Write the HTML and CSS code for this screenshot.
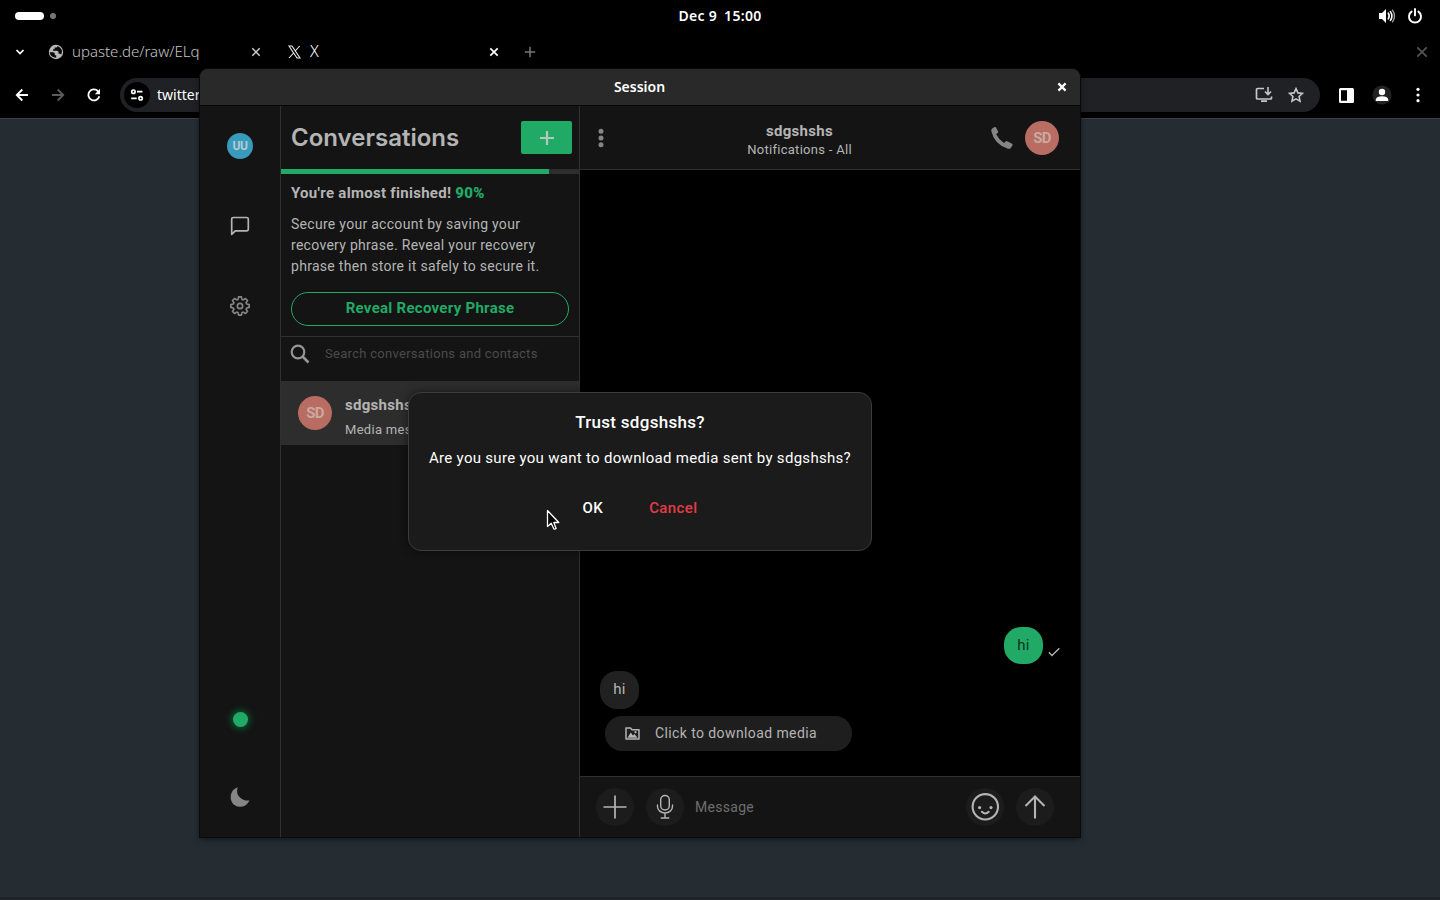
FILE: index.html
```html
<!DOCTYPE html>
<html lang="en">
  <head>
    <meta charset="UTF-8" />
    <meta name="viewport" content="width=device-width, initial-scale=1.0" />
    <title>Session</title>
    <link rel="stylesheet" href="styles.css">
  </head>
  <body>
    <!-- desktop top bar -->
    <header class="topbar">
      <div class="workspaces"><span class="pill"></span><span class="dot"></span></div>
      <div class="clock"><span>Dec 9</span><span>15:00</span></div>
      <div class="tray">
        <svg width="18" height="16" viewBox="0 0 18 16"><path d="M1 5h3l4-4v14l-4-4H1z" fill="#fff"/><path d="M10.3 5.2q1.8 2.8 0 5.6M12.4 3.6q3 4.400 0 8.800" fill="none" stroke="#fff" stroke-width="1.6" stroke-linecap="round"/><path d="M14.500 2.200q4 5.800 0 11.600" fill="none" stroke="#999" stroke-width="1.400" stroke-linecap="round"/></svg>
        <svg width="16" height="16" viewBox="0 0 16 16"><path d="M4.600 3.600a6 6 0 1 0 6.800 0M8 1v6.400" fill="none" stroke="#fff" stroke-width="1.900" stroke-linecap="round"/></svg>
      </div>
    </header>

    <!-- browser -->
    <nav class="tabs">
      <svg class="tab-search" width="10" height="8" viewBox="0 0 10 8"><path d="M1.500 2 5 5.600 8.500 2" fill="none" stroke="#fff" stroke-width="1.700"/></svg>
      <div class="tab tab-first">
        <svg width="16" height="16" viewBox="0 0 16 16"><circle cx="8" cy="8" r="7.200" fill="#b8b8b8"/><path d="M1.600 8.200H5q1.800 0 1.800 1.800v1.200h1.400v2.600Q2.600 13.400 1.600 8.200zM9.600 2q-.2 1.500-1.700 1.500H6.600v1.700H5v1.500h4.200q1.300.1 1.300 1.600v1.400h1.300q1 0 1.400 1Q15.800 5 9.600 2z" fill="#0a0a0a"/></svg>
        <span class="tab-name">upaste.de/raw/ELq</span>
        <svg class="close" width="10" height="10" viewBox="0 0 10 10"><path d="m1.300 1.300 7.400 7.400m0-7.400L1.300 8.700" stroke="#ccc" stroke-width="1.500"/></svg>
      </div>
      <div class="tab tab-active">
        <svg width="13" height="14" viewBox="0 0 13 14"><path d="M1 1h3l8 12H9zM11.700 1 7.200 6M5.600 8 1 13" fill="none" stroke="#eee" stroke-width="1.100"/></svg>
        <span class="tab-name">X</span>
        <svg class="close" width="10" height="10" viewBox="0 0 10 10"><path d="m1.300 1.300 7.400 7.400m0-7.400L1.300 8.700" stroke="#fff" stroke-width="1.700"/></svg>
      </div>
      <svg class="new-tab" width="12" height="12" viewBox="0 0 12 12"><path d="M6 .8v10.400M.8 6h10.400" stroke="#777" stroke-width="1.500"/></svg>
      <svg class="browser-close" width="12" height="12" viewBox="0 0 12 12"><path d="m1.300 1.300 9.400 9.400m0-9.400-9.400 9.400" stroke="#555" stroke-width="1.700"/></svg>
    </nav>
    <div class="toolbar">
      <svg width="14" height="14" viewBox="0 0 14 14"><path d="M13 7H2M7.300 1.500 1.800 7l5.500 5.500" fill="none" stroke="#fff" stroke-width="1.900"/></svg>
      <svg width="14" height="14" viewBox="0 0 14 14"><path d="M1 7h11M6.700 1.500 12.200 7l-5.500 5.500" fill="none" stroke="#5c5c5c" stroke-width="1.800"/></svg>
      <svg width="14" height="14" viewBox="0 0 14 14"><path d="M12.300 8.200A5.500 5.500 0 1 1 10.800 3L12.500 5" fill="none" stroke="#fff" stroke-width="1.800"/><path d="M13 .8v5.400H7.800z" fill="#fff"/></svg>
      <div class="omnibox">
        <span class="site-info">
          <svg width="14" height="14" viewBox="0 0 14 14"><g fill="none" stroke="#fff" stroke-width="1.700"><circle cx="3.400" cy="3.700" r="1.700"/><path d="M7 3.700h5.500M1.200 10.300h5.500"/><circle cx="10.600" cy="10.300" r="1.700"/></g></svg>
        </span>
        <span class="url">twitter.com</span>
        <svg class="install" width="18" height="16" viewBox="0 0 18 16"><path d="M9 1.500H2.500q-1 0-1 1V11q0 1 1 1h13q1 0 1-1V9.500M6 14.200h6" fill="none" stroke="#c6c6c6" stroke-width="1.700"/><path d="M13 0v7M10 4.500l3 3 3-3" fill="none" stroke="#c6c6c6" stroke-width="1.600"/></svg>
        <svg width="16" height="16" viewBox="0 0 16 16"><path d="m8 1.700 1.900 4.200 4.600.5-3.400 3.100.9 4.600L8 11.800l-4 2.300.9-4.600L1.500 6.400l4.600-.5z" fill="none" stroke="#c6c6c6" stroke-width="1.600"/></svg>
      </div>
      <svg class="side-panel" width="15" height="15" viewBox="0 0 15 15"><path fill-rule="evenodd" d="M1.500 0h12Q15 0 15 1.500v12q0 1.500-1.500 1.500h-12Q0 15 0 13.500v-12Q0 0 1.500 0zM2 2.200v10.600h6V2.200z" fill="#fff"/></svg>
      <svg class="profile" width="20" height="20" viewBox="0 0 20 20"><circle cx="10" cy="10" r="9.500" fill="#222"/><circle cx="10" cy="7" r="3.200" fill="#fff"/><path d="M3.800 16v-1.500Q4.500 11.300 10 11.300t6.200 3.200V16z" fill="#fff"/></svg>
      <svg width="4" height="16" viewBox="0 0 4 16" fill="#fff"><circle cx="2" cy="2.300" r="1.600"/><circle cx="2" cy="8" r="1.600"/><circle cx="2" cy="13.700" r="1.600"/></svg>
    </div>
    <div class="page"></div>

    <!-- messenger window -->
    <div class="window">
      <div class="titlebar">
        <span>Session</span>
        <svg class="window-close" width="10" height="10" viewBox="0 0 10 10"><path d="m1.400 1.400 7.200 7.200m0-7.200L1.400 8.600" stroke="#fff" stroke-width="2.200"/></svg>
      </div>
      <div class="app">
        <aside class="rail">
          <span class="avatar avatar-me">UU</span>
          <svg class="rail-chat" width="20" height="20" viewBox="0 0 20 20"><path d="M1.700 18.300V3.200q0-1.700 1.700-1.700h13.200q1.700 0 1.700 1.700v9.900q0 1.700-1.700 1.700H5.200z" fill="none" stroke="#b4b4b4" stroke-width="1.700" stroke-linejoin="round"/></svg>
          <svg class="rail-gear" width="20" height="20" viewBox="0 0 24 24"><g fill="none" stroke="#858585" stroke-width="2" stroke-linejoin="round"><circle cx="12" cy="12" r="3.200"/><path d="m10.300 1.500-.7 3.100-1.500.6-2.700-1.700-2.400 2.400 1.700 2.700-.6 1.500-3.100.7v3.400l3.100.7.6 1.500L3 19.100l2.400 2.400 2.700-1.700 1.500.6.7 3.100h3.400l.7-3.100 1.500-.6 2.700 1.700 2.400-2.400-1.700-2.700.6-1.500 3.100-.7v-3.400l-3.100-.7-.6-1.500L21 5.900l-2.400-2.400-2.700 1.700-1.500-.6-.7-3.100z" transform="translate(0 -.5)"/></g></svg>
          <span class="status"></span>
          <svg class="moon" width="20" height="20" viewBox="0 0 20 20"><path d="M7.800.3Q5.700 6 9.400 9.900q4.200 4.300 10.100 3.600Q16.500 19.800 10 19.800 4.600 19.700 1.900 15.300.2 12 .8 7.900 2.200 2.200 7.800.3z" fill="#858585"/></svg>
        </aside>

        <section class="sidebar">
          <div class="sidebar-head">
            <h1>Conversations</h1>
            <button class="add"><svg width="14" height="14" viewBox="0 0 14 14"><path d="M7 0v14M0 7h14" stroke="#b5c8bd" stroke-width="2.200"/></svg></button>
          </div>
          <div class="progress"><div class="progress-bar" style="width: 90%"></div></div>
          <div class="banner">
            <p class="banner-title">You're almost finished! <b>90%</b></p>
            <p class="banner-text">Secure your account by saving your<br>recovery phrase. Reveal your recovery<br>phrase then store it safely to secure it.</p>
            <button class="reveal">Reveal Recovery Phrase</button>
          </div>
          <div class="search">
            <svg width="20" height="20" viewBox="0 0 20 20"><g fill="none" stroke="#969696"><circle cx="8" cy="8" r="6.300" stroke-width="2.200"/><path d="m12.500 12.500 6 6" stroke-width="2.600"/></g></svg>
            <span>Search conversations and contacts</span>
          </div>
          <div class="conversation">
            <span class="avatar avatar-sd">SD</span>
            <div class="conversation-info">
              <span class="conversation-name">sdgshshs</span>
              <span class="conversation-preview">Media message</span>
            </div>
          </div>
        </section>

        <main class="chat">
          <div class="chat-head">
            <svg width="6" height="20" viewBox="0 0 6 20" fill="#858585"><circle cx="3" cy="3.200" r="2.500"/><circle cx="3" cy="10" r="2.500"/><circle cx="3" cy="16.800" r="2.500"/></svg>
            <div class="chat-title">
              <span class="chat-name">sdgshshs</span>
              <span class="chat-sub">Notifications - All</span>
            </div>
            <svg class="phone" width="22" height="22" viewBox="0 0 22 22"><path d="M1 1.800 3.500.1q1-.4 1.500.5L7 4.300q.4 1-.4 1.700L5.200 7.200q2.500 5.300 7.800 8.900l1.600-1.600q.8-.7 1.700-.2l4.800 2.500q.8.700.3 1.600l-1.600 2.500q-1 1.200-2.800.8Q3.200 17.500.3 4q-.2-1.300.7-2.200z" fill="#858585"/></svg>
            <span class="avatar avatar-sd">SD</span>
          </div>
          <div class="messages">
            <div class="row row-sent">
              <span class="bubble sent">hi</span>
              <svg class="tick" width="12" height="10" viewBox="0 0 12 10"><path d="m.8 5.300 3.200 3.200 7.300-7.300" fill="none" stroke="#b4b4b4" stroke-width="1.300"/></svg>
            </div>
            <div class="row"><span class="bubble">hi</span></div>
            <div class="media">
              <svg width="15" height="13" viewBox="0 0 15 13"><path d="M1 12V1h4.500L7 2.700h7V12z" fill="none" stroke="#b4b4b4" stroke-width="1.500" stroke-linejoin="round"/><path d="m2.500 10.800 3.300-5.300 2.100 3 1.500-1.600 3.200 3.900z" fill="#b4b4b4"/><circle cx="10.500" cy="5.200" r="1.100" fill="#b4b4b4"/></svg>
              <span>Click to download media</span>
            </div>
          </div>
          <div class="composer">
            <span class="round"><svg width="24" height="24" viewBox="0 0 24 24"><path d="M12 .5v23M.5 12h23" stroke="#b4b4b4" stroke-width="1.700"/></svg></span>
            <span class="round"><svg width="18" height="26" viewBox="0 0 18 26"><g fill="none" stroke="#b4b4b4" stroke-width="1.400" stroke-linecap="round"><rect x="4.700" y="1.500" width="8.600" height="14.500" rx="4.300"/><path d="M1.500 11v1.500a7.500 6.500 0 0 0 15 0V11M9 19v5M5.200 24h7.600"/></g></svg></span>
            <span class="placeholder">Message</span>
            <span class="round"><svg width="28" height="28" viewBox="0 0 28 28"><circle cx="14.300" cy="13.800" r="12.700" fill="none" stroke="#b4b4b4" stroke-width="2.100"/><circle cx="8.600" cy="14.600" r="1.600" fill="#b4b4b4"/><circle cx="20" cy="14.600" r="1.600" fill="#b4b4b4"/><path d="M10.900 18.800q3.400 3.400 6.800 0" fill="none" stroke="#b4b4b4" stroke-width="2" stroke-linecap="round"/></svg></span>
            <span class="round"><svg width="22" height="24" viewBox="0 0 22 24"><path d="M11 23.500V1.500M1.500 11 11 1.500l9.500 9.500" fill="none" stroke="#b4b4b4" stroke-width="2.100"/></svg></span>
          </div>
        </main>
      </div>
    </div>

    <div class="dialog">
      <h2>Trust sdgshshs?</h2>
      <p>Are you sure you want to download media sent by sdgshshs?</p>
      <div class="dialog-buttons">
        <button class="ok">OK</button>
        <button class="cancel">Cancel</button>
      </div>
    </div>

    <svg class="cursor" width="15" height="22" viewBox="0 0 15 22"><path d="M1.500 1.500v16l3.700-3.300 2.600 5.600q1 .8 2.300-.3L7.800 13.500h5z" fill="#050505" stroke="#fff" stroke-width="1.300" stroke-linejoin="round"/></svg>
  </body>
</html>
```
FILE: styles.css
```css
:root {
  --green: #21aa66;
  --text: #b4b4b4;
  --panel: #141414;
  --line: #303030;
}
* {
  box-sizing: border-box;
}
body {
  margin: 0;
  height: 900px;
  display: flex;
  flex-direction: column;
  overflow: hidden;
  background: #000;
  color: #fff;
  font-family: Roboto, sans-serif;
}
svg {
  display: block;
  flex: none;
}
h1, h2, p {
  margin: 0;
}
button {
  border: none;
  padding: 0;
  background: none;
  font: inherit;
  color: inherit;
}

/* desktop top bar */
.topbar {
  height: 32px;
  display: grid;
  grid-template-columns: 1fr auto 1fr;
  align-items: center;
  padding: 0 17px 0 15px;
  font: 600 14px "Noto Sans", sans-serif;
}
.workspaces {
  display: flex;
  align-items: center;
  gap: 6px;
}
.pill {
  width: 29px;
  height: 8px;
  border-radius: 4px;
  background: #fff;
}
.dot {
  width: 6px;
  height: 6px;
  border-radius: 50%;
  background: #777;
}
.clock {
  display: flex;
  gap: 7px;
  padding: 0 0 2px 2px;
  letter-spacing: 0.3px;
}
.tray {
  display: flex;
  justify-content: flex-end;
  gap: 11px;
}

/* browser */
.tabs {
  height: 40px;
  display: flex;
  align-items: center;
  padding: 0 12px 0 15px;
  font: 300 15px "Noto Sans", sans-serif;
}
.tab {
  display: flex;
  align-items: center;
}
.tab-first {
  width: 213px;
  margin-left: 23px;
  color: #c4c4c4;
}
.tab-active {
  width: 211px;
  margin-left: 27px;
}
.tab-name {
  margin-left: 8px;
  padding-bottom: 2px;
}
.tab-active .tab-name {
  margin-left: 9px;
  font-size: 16px;
}
.close {
  margin-left: auto;
}
.new-tab {
  margin-left: 25px;
}
.browser-close {
  margin-left: auto;
}
.toolbar {
  height: 46px;
  display: flex;
  align-items: center;
  gap: 22px;
  padding: 0 20px 0 15px;
}
.omnibox {
  flex: 1;
  height: 34px;
  display: flex;
  align-items: center;
  margin: 0 -3px;
  padding: 0 16px 0 4px;
  border-radius: 17px;
  background: #202124;
  font: 14px "Noto Sans", sans-serif;
}
.site-info {
  width: 26px;
  height: 26px;
  display: grid;
  place-items: center;
  border-radius: 50%;
  background: #000;
}
.url {
  margin-left: 7px;
  padding-bottom: 1px;
}
.install {
  margin-left: auto;
  margin-right: 15px;
}
.side-panel {
  margin-right: 2px;
}
.profile {
  margin: 0 2px 0 -6px;
}
.page {
  flex: 1;
  border-top: 1px solid #3b4349;
  border-bottom: 3px solid #1d2328;
  background: #252d33;
}

/* messenger window */
.window {
  position: absolute;
  left: 200px;
  top: 69px;
  width: 880px;
  height: 768px;
  display: flex;
  flex-direction: column;
  border-radius: 8px 8px 0 0;
  background: var(--panel);
  box-shadow: 0 0 0 1px #080b0d, 0 2px 7px rgba(0, 0, 0, 0.6);
}
.titlebar {
  height: 37px;
  display: grid;
  grid-template-columns: 1fr auto 1fr;
  align-items: center;
  padding-right: 13px;
  border-bottom: 1px solid #070707;
  border-radius: 8px 8px 0 0;
  background: #292929;
  font: 600 14px "Noto Sans", sans-serif;
}
.titlebar span {
  grid-column: 2;
  margin-left: 12px;
  padding-bottom: 2px;
}
.window-close {
  justify-self: end;
}
.app {
  flex: 1;
  display: flex;
  color: var(--text);
  letter-spacing: 0.29px;
}
.avatar {
  flex: none;
  display: grid;
  place-items: center;
  border-radius: 50%;
}
.avatar-me {
  width: 26px;
  height: 26px;
  background: #389bbb;
  color: #b9c9d2;
  font-size: 12px;
  font-weight: 700;
  letter-spacing: -0.5px;
}
.avatar-sd {
  width: 34px;
  height: 34px;
  background: #b86c62;
  color: #c8aaa0;
  font-size: 15px;
  font-weight: 700;
  letter-spacing: -0.7px;
}
.rail {
  width: 80px;
  display: flex;
  flex-direction: column;
  align-items: center;
  padding: 27px 0 30px;
}
.rail-chat {
  margin-top: 57px;
}
.rail-gear {
  margin-top: 60px;
}
.status {
  width: 15px;
  height: 15px;
  margin-top: auto;
  border-radius: 50%;
  background: var(--green);
  box-shadow: 0 0 6px 2px rgba(0, 140, 60, 0.6);
}
.moon {
  margin-top: 60px;
}

.sidebar {
  width: 300px;
  border-left: 1px solid var(--line);
  border-right: 1px solid var(--line);
}
.sidebar-head {
  height: 63px;
  display: flex;
  align-items: center;
  justify-content: space-between;
  padding: 0 7px 0 10px;
}
.sidebar-head h1 {
  font: 600 24px Inter, sans-serif;
  letter-spacing: 0;
}
.add {
  width: 51px;
  height: 33px;
  display: grid;
  place-items: center;
  border-radius: 2px;
  background: var(--green);
}
.progress {
  height: 5px;
  background: #2d2d2d;
}
.progress-bar {
  height: 5px;
  background: var(--green);
}
.banner {
  height: 163px;
  padding: 9px 10px 0;
  border-bottom: 1px solid var(--line);
}
.banner-title {
  font-size: 15px;
  font-weight: 700;
  line-height: 20px;
}
.banner-title b {
  color: var(--green);
}
.banner-text {
  margin-top: 11px;
  font-size: 14px;
  line-height: 21px;
}
.reveal {
  width: 278px;
  height: 34px;
  margin-top: 15px;
  padding-bottom: 2px;
  border: 1px solid var(--green);
  border-radius: 17px;
  color: var(--green);
  font-size: 15px;
  font-weight: 700;
  letter-spacing: 0.28px;
}
.search {
  height: 44px;
  display: flex;
  align-items: center;
  gap: 15px;
  padding: 0 10px 10px 9px;
  color: #4b4b4b;
  font-size: 13px;
}
.search span {
  padding-bottom: 1px;
}
.conversation {
  height: 64px;
  display: flex;
  align-items: center;
  gap: 13px;
  padding-left: 17px;
  background: #2d2d2d;
}
.conversation-info {
  display: flex;
  flex-direction: column;
  gap: 5px;
  padding-top: 9px;
  line-height: 20px;
}
.conversation-name {
  font-size: 15px;
  font-weight: 700;
}
.conversation-preview {
  font-size: 13px;
}

.chat {
  flex: 1;
  display: flex;
  flex-direction: column;
}
.chat-head {
  height: 64px;
  display: flex;
  align-items: center;
  padding: 0 21px 0 18px;
  border-bottom: 1px solid var(--line);
}
.chat-title {
  flex: 1;
  display: flex;
  flex-direction: column;
  align-items: center;
  gap: 1px;
  padding: 6px 0 0 4px;
  font-size: 13px;
  line-height: 18px;
}
.chat-name {
  font-size: 15px;
  font-weight: 700;
}
.phone {
  margin-right: 12px;
}
.messages {
  flex: 1;
  display: flex;
  flex-direction: column;
  justify-content: flex-end;
  padding: 0 20px 25px;
  background: #000;
}
.row {
  display: flex;
  margin-bottom: 7px;
}
.row-sent {
  justify-content: flex-end;
}
.bubble {
  width: 39px;
  height: 38px;
  border-radius: 17px;
  background: #212121;
  font-size: 15px;
  line-height: 36px;
  text-align: center;
}
.bubble.sent {
  height: 37px;
  background: var(--green);
  color: #10331f;
}
.tick {
  align-self: flex-end;
  margin: 0 0 7px 5px;
}
.media {
  width: 247px;
  height: 35px;
  display: flex;
  align-items: center;
  gap: 15px;
  margin-left: 5px;
  padding-left: 20px;
  border-radius: 17px;
  background: #1e1e1e;
  font-size: 14px;
  letter-spacing: 0.4px;
}
.media span {
  padding-bottom: 2px;
}
.composer {
  height: 61px;
  display: flex;
  align-items: center;
  gap: 12px;
  padding: 0 26px 0 16px;
  border-top: 1px solid var(--line);
  background: var(--panel);
}
.round {
  width: 38px;
  height: 38px;
  display: grid;
  place-items: center;
  border-radius: 50%;
  background: #1c1c1c;
}
.placeholder {
  flex: 1;
  margin-left: -1px;
  color: #6e6e6e;
  font-size: 14px;
}

/* trust dialog */
.dialog {
  position: absolute;
  left: 408px;
  top: 392px;
  width: 464px;
  height: 159px;
  padding-top: 18px;
  border: 1px solid #3c3c3c;
  border-radius: 13px;
  background: #1b1b1b;
  box-shadow: 0 0 8px rgba(0, 0, 0, 0.5);
  text-align: center;
  letter-spacing: 0.3px;
}
.dialog h2 {
  font-size: 17px;
  font-weight: 500;
  line-height: 22px;
}
.dialog p {
  margin-top: 15px;
  font-size: 15px;
  line-height: 20px;
}
.dialog-buttons {
  display: flex;
  justify-content: center;
  gap: 46px;
  margin-top: 30px;
  font-size: 15px;
  font-weight: 500;
  line-height: 20px;
}
.dialog-buttons button {
  letter-spacing: 0.4px;
}
.cancel {
  color: #e33c46;
}
.cursor {
  position: absolute;
  left: 546px;
  top: 509px;
}
```
